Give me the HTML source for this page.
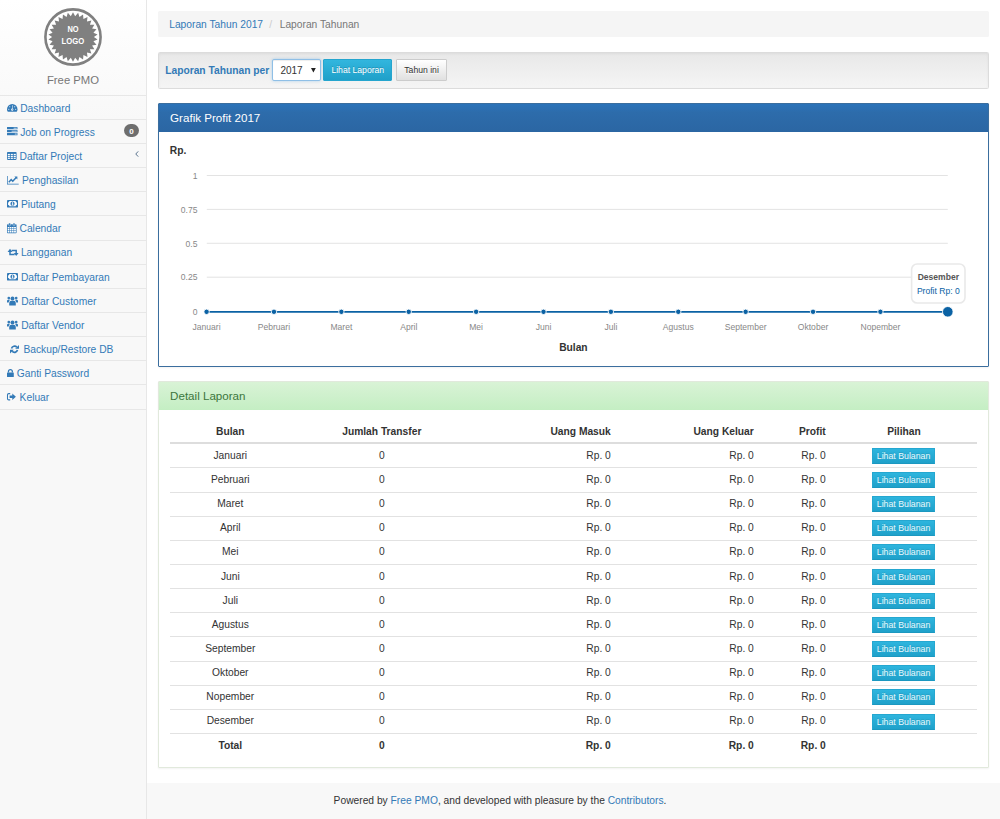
<!DOCTYPE html>
<html lang="id">
<head>
<meta charset="utf-8">
<title>Laporan Tahunan - Free PMO</title>
<style>
*{box-sizing:border-box}
html,body{margin:0;padding:0}
body{width:1000px;height:819px;overflow:hidden;background:#f8f8f8;font-family:"Liberation Sans",Arial,sans-serif;font-size:10.25px;line-height:17.15px;color:#333;position:relative}
a{color:#337ab7;text-decoration:none}
#side{position:absolute;left:0;top:0;width:147px;height:819px;border-right:1px solid #e7e7e7;background:linear-gradient(#fff 0,#f8f8f8 120px)}
#logo{position:absolute;left:44.4px;top:7.5px;width:58px;height:58px}
#brand{position:absolute;left:0;top:71px;width:146px;text-align:center;font-size:11.3px;color:#777;line-height:18px}
#menu{position:absolute;left:0;top:94.75px;width:146px;margin:0;padding:0;list-style:none;border-top:1px solid #e7e7e7}
#menu li{height:24.15px;border-bottom:1px solid #e7e7e7;padding:3.8px 7px 0;position:relative;white-space:nowrap;color:#337ab7}
#menu li svg{display:inline-block;vertical-align:-1px;margin-right:2px;fill:#337ab7}
.ic{position:absolute;display:block;overflow:visible}
.badge{position:absolute;left:123.9px;top:4.3px;padding-top:.6px;background:#6e6e6e;color:#fff;font-size:8px;font-weight:bold;border-radius:7px;width:15.1px;height:13.2px;line-height:13.2px;text-align:center}
.arrow{position:absolute;right:7px;top:1px;font-size:11px;color:#337ab7}
#main{position:absolute;left:147px;top:0;width:853px;height:783px;background:#fff}
#crumb{position:absolute;left:11.2px;top:11.2px;width:830.7px;height:25.8px;background:#f5f5f5;border-radius:1.5px;padding:5px 11px;white-space:nowrap}
#crumb .sep{color:#ccc;padding:0 7.6px 0 6.2px}
#crumb .act{color:#777}
#well{position:absolute;left:11.2px;top:51.9px;width:830.7px;height:36.7px;border:1px solid #dcdcdc;border-radius:1.5px;background:linear-gradient(#e8e8e8,#f5f5f5);box-shadow:inset 0 1px 3px rgba(0,0,0,.05),0 1px 0 rgba(255,255,255,.1)}
#well b{position:absolute;left:6px;top:9px;color:#337ab7;white-space:nowrap}
#sel{position:absolute;left:112.8px;top:6.1px;width:49.2px;height:22px;border:1px solid #8fbfe6;border-radius:2px;background:#fff;box-shadow:inset 0 1px 1px rgba(0,0,0,.075),0 0 3px rgba(102,175,233,.5);padding:2px 0 0 7.4px;color:#333;font-size:10px}
#sel svg{position:absolute;left:38.4px;top:8.2px}
.btn{position:absolute;top:6.1px;height:22px;border-radius:1px;font-size:8.65px;text-align:center;line-height:20px;white-space:nowrap}
.btn-info{background:linear-gradient(#32b6de,#1fa0c9);border:1px solid #25a5ce;color:#fff;text-shadow:0 -1px 0 rgba(0,0,0,.2)}
.btn-def{background:linear-gradient(#fff,#e0e0e0);border:1px solid #ccc;color:#333;text-shadow:0 1px 0 #fff}
.panel{position:absolute;left:11.2px;width:830.7px;border:1px solid;border-radius:1px;background:#fff;box-shadow:0 1px 2px rgba(0,0,0,.05)}
.panel .hd{height:27.5px;padding:4.7px 10.9px;font-size:11.6px;line-height:17px;border-radius:0}
#p1{top:103.1px;height:263.5px;border-color:#3b6e9e}
#p1 .hd{background:linear-gradient(#2b73b9,#2d6cab 30%,#2b66a3);color:#fff}
#p2{top:381.2px;height:387px;border-color:#e1e9dc}
#p2 .hd{background:linear-gradient(#d9f3d6,#c4eec3);color:#3c763d}
#chart{position:absolute;left:0;top:0}
table{position:absolute;left:10.6px;top:36.9px;width:807.4px;border-collapse:separate;border-spacing:0}
th,td{padding:2.5px 5px 3.5px;line-height:17.15px;border-top:1px solid #e2e2e2;text-align:center;white-space:nowrap}
th{border-top:0;border-bottom:2px solid #ddd;font-weight:bold;padding:4.2px 5px 1.8px}
tbody tr:first-child td{border-top:0}
td.r,th.r{text-align:right}
tr.tot td{font-weight:bold}
td .b{display:inline-block;width:63px;height:16px;border-radius:.5px;font-size:8.75px;line-height:14px;vertical-align:top;position:relative;top:1.1px;left:-.4px;background:linear-gradient(#2eb5de,#1fa1ca);border:1px solid #25a7d0;border-bottom-color:#1c98c0;color:#ecfbff;text-shadow:0 -1px 0 rgba(0,0,0,.12)}
#foot{position:absolute;left:0;top:792px;width:1000px;text-align:center;color:#333}
</style>
</head>
<body>
<div id="side">
<svg id="logo" viewBox="0 0 58 58"><circle cx="29" cy="29" r="27.6" fill="#fff" stroke="#808080" stroke-width="2.6"/><polygon id="star" fill="#808080" points="29.00,4.30 31.18,8.21 34.14,4.84 35.46,9.12 39.05,6.44 39.45,10.90 43.52,9.02 42.98,13.47 47.36,12.47 45.91,16.72 50.39,16.65 48.09,20.50 52.49,21.37 49.44,24.65 53.56,26.42 49.90,29.00 53.56,31.58 49.44,33.35 52.49,36.63 48.09,37.50 50.39,41.35 45.91,41.28 47.36,45.53 42.98,44.53 43.52,48.98 39.45,47.10 39.05,51.56 35.46,48.88 34.14,53.16 31.18,49.79 29.00,53.70 26.82,49.79 23.86,53.16 22.54,48.88 18.95,51.56 18.55,47.10 14.48,48.98 15.02,44.53 10.64,45.53 12.09,41.28 7.61,41.35 9.91,37.50 5.51,36.63 8.56,33.35 4.44,31.58 8.10,29.00 4.44,26.42 8.56,24.65 5.51,21.37 9.91,20.50 7.61,16.65 12.09,16.72 10.64,12.47 15.02,13.47 14.48,9.02 18.55,10.90 18.95,6.44 22.54,9.12 23.86,4.84 26.82,8.21"/><text x="29" y="23.8" text-anchor="middle" font-family="Liberation Sans,Arial,sans-serif" font-weight="bold" font-size="9.8" textLength="11.2" lengthAdjust="spacingAndGlyphs" fill="#fff">NO</text><text x="29" y="36" text-anchor="middle" font-family="Liberation Sans,Arial,sans-serif" font-weight="bold" font-size="9.8" textLength="22.8" lengthAdjust="spacingAndGlyphs" fill="#fff">LOGO</text></svg>
<div id="brand">Free PMO</div>
<ul id="menu">
<li style="padding-left:20.2px"><svg class="ic" style="left:7.3px;top:8.25px" width="10.5" height="7.8" viewBox="0 0 105 78"><path d="M0,52A52.5,52 0 0 1 105,52Q105,67 97,78H8Q0,67 0,52Z" fill="#337ab7"/><circle cx="18" cy="52" r="5.5" fill="#fff"/><circle cx="28" cy="28" r="5.5" fill="#fff"/><circle cx="77" cy="28" r="5.5" fill="#fff"/><circle cx="87" cy="52" r="5.5" fill="#fff"/><path d="M50,12h6l-1,34a11,11 0 1 1 -5,0z" fill="#fff"/><circle cx="52.5" cy="57" r="5" fill="#337ab7"/></svg>Dashboard</li>
<li style="padding-left:20.2px"><svg class="ic" style="left:7.3px;top:7.5px" width="10.5" height="8.2" viewBox="0 0 105 82"><rect x="0" y="0" width="105" height="23" rx="3" fill="#337ab7"/><rect x="0" y="30" width="105" height="23" rx="3" fill="#337ab7"/><rect x="0" y="60" width="105" height="22" rx="3" fill="#337ab7"/><rect x="66" y="8" width="32" height="7" fill="#fff"/><rect x="46" y="38" width="52" height="7" fill="#fff"/><rect x="78" y="67" width="20" height="7" fill="#fff"/></svg>Job on Progress<span class="badge">0</span></li>
<li style="padding-left:19.5px"><svg class="ic" style="left:7.3px;top:7.95px" width="9.6" height="7.9" viewBox="0 0 96 79"><rect x="0" y="0" width="96" height="79" rx="8" fill="#337ab7"/><rect x="8" y="19" width="21" height="12" fill="#fff"/><rect x="8" y="38" width="21" height="12" fill="#fff"/><rect x="8" y="57" width="21" height="12" fill="#fff"/><rect x="37.5" y="19" width="21" height="12" fill="#fff"/><rect x="37.5" y="38" width="21" height="12" fill="#fff"/><rect x="37.5" y="57" width="21" height="12" fill="#fff"/><rect x="67" y="19" width="21" height="12" fill="#fff"/><rect x="67" y="38" width="21" height="12" fill="#fff"/><rect x="67" y="57" width="21" height="12" fill="#fff"/></svg>Daftar Project<svg class="ic" style="left:135.3px;top:6.9px" width="3.8" height="6" viewBox="0 0 40 64"><path d="M34,4L8,32L34,60" fill="none" stroke="#4f6a86" stroke-width="10"/></svg></li>
<li style="padding-left:22px"><svg class="ic" style="left:7.3px;top:7.8px" width="11.7" height="8.5" viewBox="0 0 117 85"><path d="M0,0H7V78H117V85H0Z" fill="#337ab7"/><path d="M18,62L42,36L58,52L92,16" fill="none" stroke="#337ab7" stroke-width="15" stroke-linejoin="miter"/><path d="M74,6H104V36Z" fill="#337ab7"/></svg>Penghasilan</li>
<li style="padding-left:20.9px"><svg class="ic" style="left:7.3px;top:8.05px" width="11" height="7.4" viewBox="0 0 110 74"><rect x="0" y="0" width="110" height="74" rx="4" fill="#337ab7"/><path d="M24,11H86A13,13 0 0 0 99,24V50A13,13 0 0 0 86,63H24A13,13 0 0 0 11,50V24A13,13 0 0 0 24,11Z" fill="#fff"/><ellipse cx="55" cy="37" rx="21" ry="23" fill="#337ab7"/><path d="M50,26L57,22h4v26h5v6H46v-6h6V31l-4,2z" fill="#fff"/></svg>Piutang</li>
<li style="padding-left:19.5px"><svg class="ic" style="left:7.3px;top:6.9px" width="9.6" height="10.2" viewBox="0 0 96 102"><rect x="0" y="12" width="96" height="90" rx="7" fill="#337ab7"/><rect x="7" y="40" width="17" height="15" fill="#fff"/><rect x="7" y="60" width="17" height="15" fill="#fff"/><rect x="7" y="80" width="17" height="15" fill="#fff"/><rect x="29" y="40" width="16" height="15" fill="#fff"/><rect x="29" y="60" width="16" height="15" fill="#fff"/><rect x="29" y="80" width="16" height="15" fill="#fff"/><rect x="50" y="40" width="16" height="15" fill="#fff"/><rect x="50" y="60" width="16" height="15" fill="#fff"/><rect x="50" y="80" width="16" height="15" fill="#fff"/><rect x="71" y="40" width="18" height="15" fill="#fff"/><rect x="71" y="60" width="18" height="15" fill="#fff"/><rect x="71" y="80" width="18" height="15" fill="#fff"/><rect x="17" y="0" width="18" height="28" rx="7" fill="#337ab7" stroke="#fff" stroke-width="4"/><rect x="61" y="0" width="18" height="28" rx="7" fill="#337ab7" stroke="#fff" stroke-width="4"/></svg>Calendar</li>
<li style="padding-left:20.9px"><svg class="ic" style="left:8.1px;top:8.75px" width="10.2" height="6.8" viewBox="0 0 102 68"><path d="M20,26V54H66" fill="none" stroke="#337ab7" stroke-width="15"/><path d="M20,-2L44,29H-4Z" fill="#337ab7"/><path d="M36,14H82V42" fill="none" stroke="#337ab7" stroke-width="15"/><path d="M82,70L58,39H106Z" fill="#337ab7"/></svg>Langganan</li>
<li style="padding-left:20.9px"><svg class="ic" style="left:7.3px;top:8.05px" width="11" height="7.4" viewBox="0 0 110 74"><rect x="0" y="0" width="110" height="74" rx="4" fill="#337ab7"/><path d="M24,11H86A13,13 0 0 0 99,24V50A13,13 0 0 0 86,63H24A13,13 0 0 0 11,50V24A13,13 0 0 0 24,11Z" fill="#fff"/><ellipse cx="55" cy="37" rx="21" ry="23" fill="#337ab7"/><path d="M50,26L57,22h4v26h5v6H46v-6h6V31l-4,2z" fill="#fff"/></svg>Daftar Pembayaran</li>
<li style="padding-left:21.2px"><svg class="ic" style="left:7.2px;top:7px" width="11.1" height="9.4" viewBox="0 0 111 94"><circle cx="55" cy="25" r="20" fill="#337ab7"/><path d="M22,94V70Q22,48 44,48H66Q88,48 88,70V94Z" fill="#337ab7"/><circle cx="18" cy="21" r="13.5" fill="#337ab7"/><circle cx="92" cy="21" r="13.5" fill="#337ab7"/><path d="M0,64V50Q0,37 13,37H31Q18,48 17,64Z" fill="#337ab7"/><path d="M110,64V50Q110,37 97,37H79Q92,48 93,64Z" fill="#337ab7"/></svg>Daftar Customer</li>
<li style="padding-left:21.2px"><svg class="ic" style="left:7.2px;top:7px" width="11.1" height="9.4" viewBox="0 0 111 94"><circle cx="55" cy="25" r="20" fill="#337ab7"/><path d="M22,94V70Q22,48 44,48H66Q88,48 88,70V94Z" fill="#337ab7"/><circle cx="18" cy="21" r="13.5" fill="#337ab7"/><circle cx="92" cy="21" r="13.5" fill="#337ab7"/><path d="M0,64V50Q0,37 13,37H31Q18,48 17,64Z" fill="#337ab7"/><path d="M110,64V50Q110,37 97,37H79Q92,48 93,64Z" fill="#337ab7"/></svg>Daftar Vendor</li>
<li style="padding-left:23.4px"><svg class="ic" style="left:9.6px;top:7.75px" width="9" height="8.6" viewBox="0 0 90 86"><path d="M15.1,35.0A31,31 0 0 1 68.7,23.1" fill="none" stroke="#337ab7" stroke-width="17"/><path d="M90,0V38H52Z" fill="#337ab7"/><path d="M74.9,51.0A31,31 0 0 1 21.3,62.9" fill="none" stroke="#337ab7" stroke-width="17"/><path d="M0,86V48H38Z" fill="#337ab7"/></svg>Backup/Restore DB</li>
<li style="padding-left:16.8px"><svg class="ic" style="left:7.2px;top:7.7px" width="6.8" height="7.9" viewBox="0 0 68 79"><rect x="0" y="34" width="68" height="45" rx="5" fill="#337ab7"/><path d="M14.5,36V25A19.5,19.5 0 0 1 53.5,25V36" fill="none" stroke="#337ab7" stroke-width="13"/></svg>Ganti Password</li>
<li style="padding-left:19.6px"><svg class="ic" style="left:7.2px;top:8.05px" width="8.9" height="7.5" viewBox="0 0 89 75"><path d="M32,6H17Q5,6 5,18V57Q5,69 17,69H32" fill="none" stroke="#337ab7" stroke-width="10.5"/><path d="M26,26H53V5L89,37.5L53,70V49H26Z" fill="#337ab7"/></svg>Keluar</li>
</ul>
</div>
<div id="main">
<div id="crumb"><a>Laporan Tahun 2017</a><span class="sep">/</span><span class="act">Laporan Tahunan</span></div>
<div id="well"><b>Laporan Tahunan per</b><div id="sel">2017<svg width="4.8" height="4.4" viewBox="0 0 44 36" preserveAspectRatio="none"><path d="M0,0H44L22,36Z" fill="#222"/></svg></div><span class="btn btn-info" style="left:163.9px;width:69.4px">Lihat Laporan</span><span class="btn btn-def" style="left:236.9px;width:51px">Tahun ini</span></div>
<div class="panel" id="p1"><div class="hd">Grafik Profit 2017</div>
<svg id="chart" width="828.5" height="261.5" viewBox="0 0 828.5 261.5" font-family="Liberation Sans,Arial,sans-serif">
<text x="10.8" y="49.5" font-size="10.25" font-weight="bold" fill="#333">Rp.</text>
<line x1="47.8" x2="788.8" y1="71.5" y2="71.5" stroke="#dcdcdc" stroke-width="0.8"/>
<text x="38.4" y="74.7" font-size="8.55" fill="#888" text-anchor="end">1</text>
<line x1="47.8" x2="788.8" y1="105.4" y2="105.4" stroke="#dcdcdc" stroke-width="0.8"/>
<text x="38.4" y="108.6" font-size="8.55" fill="#888" text-anchor="end">0.75</text>
<line x1="47.8" x2="788.8" y1="139.3" y2="139.3" stroke="#dcdcdc" stroke-width="0.8"/>
<text x="38.4" y="142.5" font-size="8.55" fill="#888" text-anchor="end">0.5</text>
<line x1="47.8" x2="788.8" y1="173.2" y2="173.2" stroke="#dcdcdc" stroke-width="0.8"/>
<text x="38.4" y="176.4" font-size="8.55" fill="#888" text-anchor="end">0.25</text>
<line x1="47.8" x2="788.8" y1="207.6" y2="207.6" stroke="#dcdcdc" stroke-width="0.8"/>
<text x="38.4" y="210.8" font-size="8.55" fill="#888" text-anchor="end">0</text>
<line x1="47.6" x2="788.8" y1="207.8" y2="207.8" stroke="#0b62a4" stroke-width="1.8"/>
<circle cx="47.6" cy="207.8" r="2.7" fill="#0b62a4" stroke="#fff" stroke-width="0.9"/>
<text x="47.6" y="225.9" font-size="8.55" fill="#888" text-anchor="middle">Januari</text>
<circle cx="114.98" cy="207.8" r="2.7" fill="#0b62a4" stroke="#fff" stroke-width="0.9"/>
<text x="114.98" y="225.9" font-size="8.55" fill="#888" text-anchor="middle">Pebruari</text>
<circle cx="182.36" cy="207.8" r="2.7" fill="#0b62a4" stroke="#fff" stroke-width="0.9"/>
<text x="182.36" y="225.9" font-size="8.55" fill="#888" text-anchor="middle">Maret</text>
<circle cx="249.75" cy="207.8" r="2.7" fill="#0b62a4" stroke="#fff" stroke-width="0.9"/>
<text x="249.75" y="225.9" font-size="8.55" fill="#888" text-anchor="middle">April</text>
<circle cx="317.13" cy="207.8" r="2.7" fill="#0b62a4" stroke="#fff" stroke-width="0.9"/>
<text x="317.13" y="225.9" font-size="8.55" fill="#888" text-anchor="middle">Mei</text>
<circle cx="384.51" cy="207.8" r="2.7" fill="#0b62a4" stroke="#fff" stroke-width="0.9"/>
<text x="384.51" y="225.9" font-size="8.55" fill="#888" text-anchor="middle">Juni</text>
<circle cx="451.89" cy="207.8" r="2.7" fill="#0b62a4" stroke="#fff" stroke-width="0.9"/>
<text x="451.89" y="225.9" font-size="8.55" fill="#888" text-anchor="middle">Juli</text>
<circle cx="519.27" cy="207.8" r="2.7" fill="#0b62a4" stroke="#fff" stroke-width="0.9"/>
<text x="519.27" y="225.9" font-size="8.55" fill="#888" text-anchor="middle">Agustus</text>
<circle cx="586.65" cy="207.8" r="2.7" fill="#0b62a4" stroke="#fff" stroke-width="0.9"/>
<text x="586.65" y="225.9" font-size="8.55" fill="#888" text-anchor="middle">September</text>
<circle cx="654.04" cy="207.8" r="2.7" fill="#0b62a4" stroke="#fff" stroke-width="0.9"/>
<text x="654.04" y="225.9" font-size="8.55" fill="#888" text-anchor="middle">Oktober</text>
<circle cx="721.42" cy="207.8" r="2.7" fill="#0b62a4" stroke="#fff" stroke-width="0.9"/>
<text x="721.42" y="225.9" font-size="8.55" fill="#888" text-anchor="middle">Nopember</text>
<circle cx="788.8" cy="207.8" r="5.3" fill="#0b62a4" stroke="#fff" stroke-width="0.9"/>
<text x="414.4" y="246.9" font-size="10.25" font-weight="bold" fill="#333" text-anchor="middle">Bulan</text>
<rect x="752.6" y="160" width="53.4" height="39" rx="5.5" fill="#fff" fill-opacity=".9" stroke="#e9e9e9" stroke-width="1.6"/>
<text x="779.3" y="175.5" font-size="8.55" font-weight="bold" fill="#555" text-anchor="middle">Desember</text>
<text x="779.3" y="189.9" font-size="8.55" fill="#0b62a4" text-anchor="middle">Profit Rp: 0</text>
</svg>
</div>
<div class="panel" id="p2"><div class="hd">Detail Laporan</div>
<table>
<thead><tr><th style="width:121px">Bulan</th><th style="width:182px">Jumlah Transfer</th><th class="r" style="width:143px">Uang Masuk</th><th class="r" style="width:143px">Uang Keluar</th><th class="r" style="width:72px">Profit</th><th>Pilihan</th></tr></thead>
<tbody>
<tr><td>Januari</td><td>0</td><td class="r">Rp. 0</td><td class="r">Rp. 0</td><td class="r">Rp. 0</td><td><span class="b">Lihat Bulanan</span></td></tr>
<tr><td>Pebruari</td><td>0</td><td class="r">Rp. 0</td><td class="r">Rp. 0</td><td class="r">Rp. 0</td><td><span class="b">Lihat Bulanan</span></td></tr>
<tr><td>Maret</td><td>0</td><td class="r">Rp. 0</td><td class="r">Rp. 0</td><td class="r">Rp. 0</td><td><span class="b">Lihat Bulanan</span></td></tr>
<tr><td>April</td><td>0</td><td class="r">Rp. 0</td><td class="r">Rp. 0</td><td class="r">Rp. 0</td><td><span class="b">Lihat Bulanan</span></td></tr>
<tr><td>Mei</td><td>0</td><td class="r">Rp. 0</td><td class="r">Rp. 0</td><td class="r">Rp. 0</td><td><span class="b">Lihat Bulanan</span></td></tr>
<tr><td>Juni</td><td>0</td><td class="r">Rp. 0</td><td class="r">Rp. 0</td><td class="r">Rp. 0</td><td><span class="b">Lihat Bulanan</span></td></tr>
<tr><td>Juli</td><td>0</td><td class="r">Rp. 0</td><td class="r">Rp. 0</td><td class="r">Rp. 0</td><td><span class="b">Lihat Bulanan</span></td></tr>
<tr><td>Agustus</td><td>0</td><td class="r">Rp. 0</td><td class="r">Rp. 0</td><td class="r">Rp. 0</td><td><span class="b">Lihat Bulanan</span></td></tr>
<tr><td>September</td><td>0</td><td class="r">Rp. 0</td><td class="r">Rp. 0</td><td class="r">Rp. 0</td><td><span class="b">Lihat Bulanan</span></td></tr>
<tr><td>Oktober</td><td>0</td><td class="r">Rp. 0</td><td class="r">Rp. 0</td><td class="r">Rp. 0</td><td><span class="b">Lihat Bulanan</span></td></tr>
<tr><td>Nopember</td><td>0</td><td class="r">Rp. 0</td><td class="r">Rp. 0</td><td class="r">Rp. 0</td><td><span class="b">Lihat Bulanan</span></td></tr>
<tr><td>Desember</td><td>0</td><td class="r">Rp. 0</td><td class="r">Rp. 0</td><td class="r">Rp. 0</td><td><span class="b">Lihat Bulanan</span></td></tr>
<tr class="tot"><td>Total</td><td>0</td><td class="r">Rp. 0</td><td class="r">Rp. 0</td><td class="r">Rp. 0</td><td></td></tr>
</tbody>
</table>
</div>
</div>
<div id="foot">Powered by <a>Free PMO</a>, and developed with pleasure by the <a>Contributors</a>.</div>
</body>
</html>
